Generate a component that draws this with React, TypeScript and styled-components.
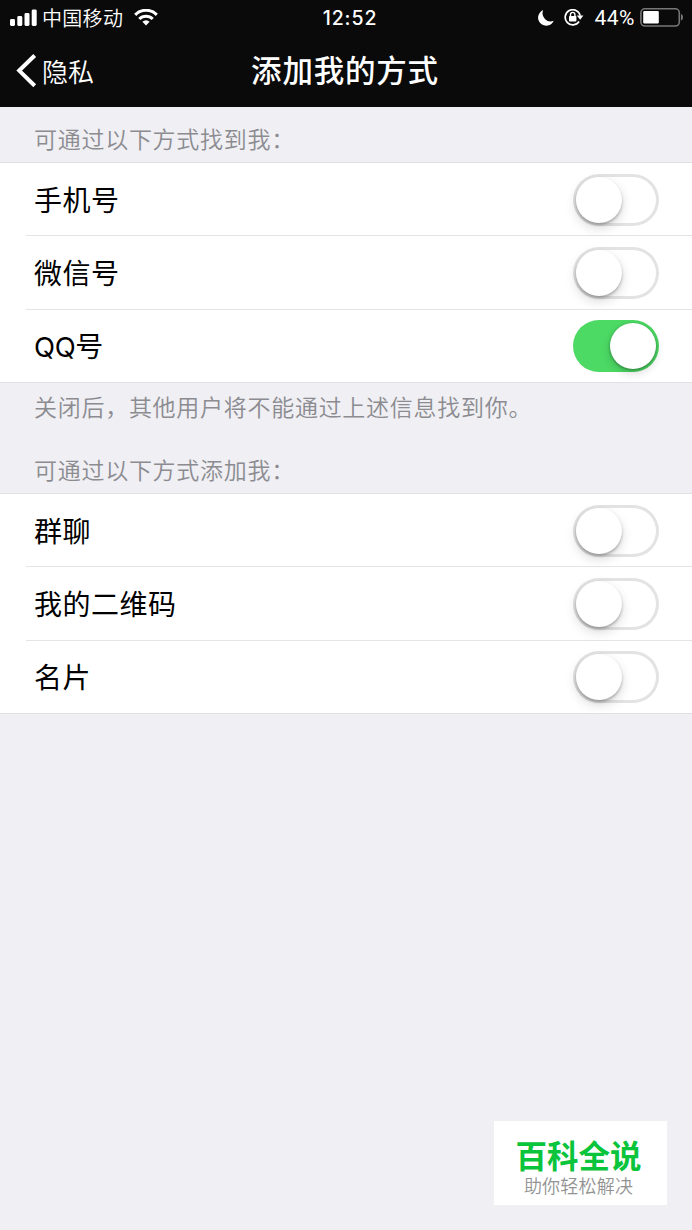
import React, { useState } from "react";
import styled, { createGlobalStyle } from "styled-components";

const GlobalStyle = createGlobalStyle`
  * { box-sizing: border-box; }
  body {
    margin: 0;
    background: #efeff4;
    font-family: "Inter", "Noto Sans CJK SC", sans-serif;
  }
`;

const Screen = styled.div`
  position: relative;
  width: 692px;
  height: 1230px;
  overflow: hidden;
  background: #efeff4;
`;

const Header = styled.header`
  height: 107px;
  background: #0a0a0a;
  color: #fff;
`;

const StatusBar = styled.div`
  display: grid;
  grid-template-columns: 1fr auto 1fr;
  align-items: center;
  height: 35px;
  padding: 0 8px 0 10px;
`;

const StatusSide = styled.div<{ $end?: boolean }>`
  display: flex;
  align-items: center;
  justify-content: ${(p) => (p.$end ? "flex-end" : "flex-start")};
`;

const Carrier = styled.span`
  margin: 0 11px 0 5px;
  font: 350 20px/34px "Noto Sans CJK SC", sans-serif;
  letter-spacing: 0.3px;
`;

const Clock = styled.span`
  padding-left: 6px;
  font-size: 19.5px;
  font-weight: 500;
  line-height: 35px;
  letter-spacing: 0.9px;
`;

const Percent = styled.span`
  margin: 0 5px 0 11px;
  font: 400 21px/36px Roboto, sans-serif;
  letter-spacing: 0.5px;
`;

const MoonSlot = styled.span`
  display: flex;
  margin-right: 10px;
`;

const NavBar = styled.nav`
  display: grid;
  grid-template-columns: 1fr auto 1fr;
  align-items: center;
  height: 72px;
  padding: 0 17px 0 16px;
`;

const BackButton = styled.button`
  display: flex;
  align-items: center;
  gap: 5px;
  padding: 0;
  border: 0;
  background: none;
  color: #fff;
  font: 350 26px/72px "Noto Sans CJK SC", sans-serif;
`;

const Title = styled.h1`
  margin: 0;
  padding: 0 1px 3px 0;
  font: 500 30.5px/69px "Noto Sans CJK SC", sans-serif;
  letter-spacing: 0.8px;
`;

const Note = styled.p<{ $height: number; $top: number }>`
  height: ${(p) => p.$height}px;
  margin: 0;
  padding: ${(p) => p.$top}px 34px 0;
  color: #8b8b90;
  font: 350 23px/32px "Noto Sans CJK SC", sans-serif;
  letter-spacing: 0.72px;
`;

const List = styled.ul`
  margin: 0;
  padding: 0 0 0 26px;
  height: 221px;
  list-style: none;
  background: #fff;
  border-top: 1px solid #e1e1e4;
  border-bottom: 1px solid #e1e1e4;
`;

const Row = styled.li`
  display: flex;
  align-items: center;
  justify-content: space-between;
  height: 73.4px;
  padding: 1px 33px 0 8px;
  &:first-child { height: 72.4px; padding-top: 2px; }
  & + & { border-top: 1px solid #e4e4e6; }
`;

const Label = styled.span`
  margin-bottom: 3px;
  color: #000;
  font: 400 28px/40px "Noto Sans CJK SC", sans-serif;
  letter-spacing: 0.5px;
`;

const Latin = styled.span`
  font-family: Inter, sans-serif;
  font-size: 27.5px;
  line-height: 1;
  letter-spacing: -0.4px;
`;

const Track = styled.button<{ $on: boolean }>`
  display: flex;
  align-items: center;
  justify-content: ${(p) => (p.$on ? "flex-end" : "flex-start")};
  width: 86px;
  height: 52px;
  padding: 0 3px;
  border: 0;
  border-radius: 26px;
  background: ${(p) => (p.$on ? "#4cd964" : "#fff")};
  box-shadow: ${(p) => (p.$on ? "none" : "inset 0 0 0 3px #e3e3e3")};
`;

const Thumb = styled.span<{ $on: boolean }>`
  width: 46px;
  height: 46px;
  border-radius: 50%;
  background: #fff;
  box-shadow: ${(p) =>
    p.$on
      ? "0 1px 3px rgba(0,0,0,.35), 0 4px 10px rgba(0,0,0,.16)"
      : "0 2px 3px rgba(0,0,0,.26), 0 5px 12px rgba(0,0,0,.15)"};
`;

const Badge = styled.aside`
  position: absolute;
  right: 25px;
  bottom: 25px;
  display: flex;
  flex-direction: column;
  align-items: center;
  width: 173px;
  height: 84px;
  padding: 13px 4px 0 0;
  background: #fff;
`;

const BadgeName = styled.strong`
  color: #0ac43c;
  font: 700 31.5px/40px "Noto Sans CJK SC", sans-serif;
`;

const BadgeSlogan = styled.span`
  color: #939393;
  font: 350 18px/22px "Noto Sans CJK SC", sans-serif;
  letter-spacing: 0.2px;
`;

const SignalIcon = () => (
  <svg width="27" height="18" viewBox="0 0 27 18" fill="#fff">
    <rect x="0" y="10" width="5" height="7" rx="1.4" />
    <rect x="7.3" y="7" width="5" height="10" rx="1.4" />
    <rect x="14.5" y="4" width="5" height="13" rx="1.4" />
    <rect x="21.7" y="0.5" width="5" height="16.5" rx="1.4" />
  </svg>
);

const WifiIcon = () => (
  <svg width="24" height="18" viewBox="0 0 24 18" fill="none" stroke="#fff" strokeWidth="3.1">
    <path d="M1.2 5.8a15.2 15.2 0 0 1 21.6 0" />
    <path d="M5.3 10a9.5 9.5 0 0 1 13.4 0" />
    <path d="M12 16.5l-3.6-3.7a5 5 0 0 1 7.2 0z" fill="#fff" stroke="none" />
  </svg>
);

const MoonIcon = () => (
  <svg width="16" height="17" viewBox="0 0 16 17" fill="#fff">
    <path d="M5.2.1A8.1 8.1 0 1 0 15.7 10.7 8.1 8.1 0 0 1 5.2.1z" />
  </svg>
);

const LockIcon = () => (
  <svg width="20" height="18" viewBox="0 0 20 18" fill="none">
    <path d="M15.1 12.6A7.6 7.6 0 1 1 16.2 6.6" stroke="#fff" strokeWidth="1.7" />
    <path d="M12.8 6.6h6.6l-3.2 4.1z" fill="#fff" />
    <rect x="5" y="7" width="7.4" height="5.5" rx=".7" fill="#fff" />
    <path d="M6.5 7.1V5.6a2.2 2.2 0 0 1 4.4 0v1.5" stroke="#fff" strokeWidth="1.4" />
  </svg>
);

const BatteryIcon = () => (
  <svg width="44" height="20" viewBox="0 0 44 20">
    <rect x=".9" y=".8" width="38.4" height="17.2" rx="4" fill="none" stroke="#777" strokeWidth="1.6" />
    <rect x="3.2" y="2.9" width="15.6" height="12.6" rx="1.2" fill="#fff" />
    <path d="M41 6c2.7.8 2.7 5.8 0 6.6z" fill="#777" />
  </svg>
);

const BackIcon = () => (
  <svg width="21" height="34" viewBox="0 0 21 34" fill="none" stroke="#fff" strokeWidth="4">
    <path d="M18.7 1.5 3.2 16.6 18.7 31.7" />
  </svg>
);

function Setting({ latin, label, initial = false }: { latin?: string; label: string; initial?: boolean }) {
  const [on, setOn] = useState(initial);
  return (
    <Row>
      <Label>
        {latin && <Latin>{latin}</Latin>}
        {label}
      </Label>
      <Track $on={on} role="switch" aria-checked={on} onClick={() => setOn(!on)}>
        <Thumb $on={on} />
      </Track>
    </Row>
  );
}

export default function App() {
  return (
    <>
      <GlobalStyle />
      <Screen>
        <Header>
          <StatusBar>
            <StatusSide>
              <SignalIcon />
              <Carrier>中国移动</Carrier>
              <WifiIcon />
            </StatusSide>
            <Clock>12:52</Clock>
            <StatusSide $end>
              <MoonSlot>
                <MoonIcon />
              </MoonSlot>
              <LockIcon />
              <Percent>44%</Percent>
              <BatteryIcon />
            </StatusSide>
          </StatusBar>
          <NavBar>
            <BackButton>
              <BackIcon />
              隐私
            </BackButton>
            <Title>添加我的方式</Title>
          </NavBar>
        </Header>
        <Note $height={55} $top={15}>可通过以下方式找到我：</Note>
        <List>
          <Setting label="手机号" />
          <Setting label="微信号" />
          <Setting latin="QQ" label="号" initial />
        </List>
        <Note $height={63} $top={7}>关闭后，其他用户将不能通过上述信息找到你。</Note>
        <Note $height={47} $top={7}>可通过以下方式添加我：</Note>
        <List>
          <Setting label="群聊" />
          <Setting label="我的二维码" />
          <Setting label="名片" />
        </List>
        <Badge>
          <BadgeName>百科全说</BadgeName>
          <BadgeSlogan>助你轻松解决</BadgeSlogan>
        </Badge>
      </Screen>
    </>
  );
}
